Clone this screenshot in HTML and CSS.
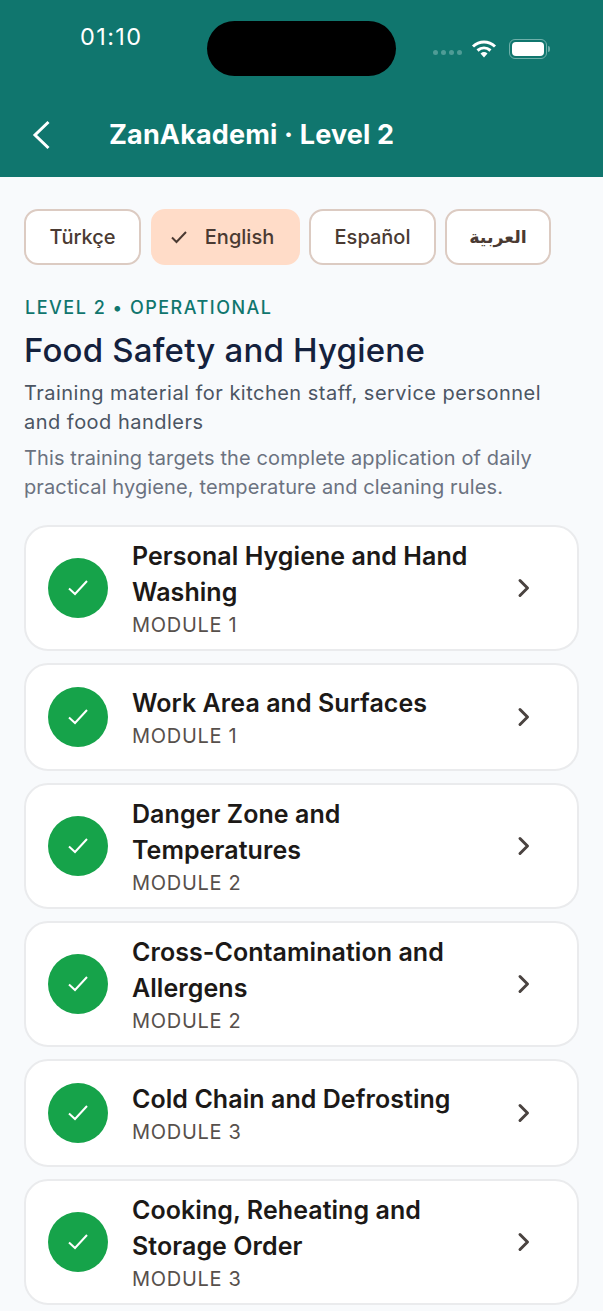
FILE: index.html
```html
<!DOCTYPE html>
<html lang="en">
<head>
  <meta charset="utf-8">
  <title>ZanAkademi - Level 2</title>
  <link rel="stylesheet" href="styles.css">
</head>
<body>

  <!-- Status bar and title -->
  <header class="top">
    <div class="status">
      <span class="time">01:10</span>
      <div class="island"></div>
      <div class="status-icons">
        <div class="signal"><i></i><i></i><i></i><i></i></div>
        <svg class="wifi" width="26" height="20" viewBox="0 0 26 20">
          <path d="M2 7.5C8.5 1.5 17.5 1.5 24 7.5" fill="none" stroke="#fff" stroke-width="3"/>
          <path d="M6.5 11.5C10.5 8 15.5 8 19.5 11.5" fill="none" stroke="#fff" stroke-width="3"/>
          <path d="M9.5 14.5C12 12.6 14 12.6 16.5 14.5L13 18.5Z" fill="#fff"/>
        </svg>
        <div class="battery"><div class="battery-fill"></div></div>
        <div class="battery-tip"></div>
      </div>
    </div>
    <div class="nav">
      <svg class="back" width="20" height="30" viewBox="0 0 20 30">
        <path d="M16.5 2L3 15L16.5 28" fill="none" stroke="#fff" stroke-width="3"/>
      </svg>
      <h1>ZanAkademi · Level 2</h1>
    </div>
  </header>

  <main class="content">
    <div class="langs">
      <button class="lang lang-tr">Türkçe</button>
      <button class="lang lang-en active">
        <svg width="18" height="14" viewBox="0 0 18 14"><path d="M2 7.5L6.5 12L16 2" fill="none" stroke="#4a3a32" stroke-width="2"/></svg>
        English
      </button>
      <button class="lang lang-es">Español</button>
      <button class="lang lang-ar" lang="ar">العربية</button>
    </div>

    <p class="eyebrow">LEVEL 2 • OPERATIONAL</p>
    <h2>Food Safety and Hygiene</h2>
    <p class="sub">Training material for kitchen staff, service personnel and food handlers</p>
    <p class="note">This training targets the complete application of daily practical hygiene, temperature and cleaning rules.</p>

    <ul class="modules">
      <li class="card">
        <div class="done"><svg width="24" height="20" viewBox="0 0 24 20"><path d="M3 10.5L9 16L21 3" fill="none" stroke="#fff" stroke-width="2"/></svg></div>
        <div class="card-text">
          <h3>Personal Hygiene and Hand Washing</h3>
          <span>MODULE 1</span>
        </div>
        <svg class="arrow" width="14" height="20" viewBox="0 0 14 20"><path d="M3 2.5L10.5 10L3 17.5" fill="none" stroke="#4a4340" stroke-width="3" stroke-linecap="round" stroke-linejoin="round"/></svg>
      </li>
      <li class="card">
        <div class="done"><svg width="24" height="20" viewBox="0 0 24 20"><path d="M3 10.5L9 16L21 3" fill="none" stroke="#fff" stroke-width="2"/></svg></div>
        <div class="card-text">
          <h3>Work Area and Surfaces</h3>
          <span>MODULE 1</span>
        </div>
        <svg class="arrow" width="14" height="20" viewBox="0 0 14 20"><path d="M3 2.5L10.5 10L3 17.5" fill="none" stroke="#4a4340" stroke-width="3" stroke-linecap="round" stroke-linejoin="round"/></svg>
      </li>
      <li class="card">
        <div class="done"><svg width="24" height="20" viewBox="0 0 24 20"><path d="M3 10.5L9 16L21 3" fill="none" stroke="#fff" stroke-width="2"/></svg></div>
        <div class="card-text">
          <h3>Danger Zone and Temperatures</h3>
          <span>MODULE 2</span>
        </div>
        <svg class="arrow" width="14" height="20" viewBox="0 0 14 20"><path d="M3 2.5L10.5 10L3 17.5" fill="none" stroke="#4a4340" stroke-width="3" stroke-linecap="round" stroke-linejoin="round"/></svg>
      </li>
      <li class="card">
        <div class="done"><svg width="24" height="20" viewBox="0 0 24 20"><path d="M3 10.5L9 16L21 3" fill="none" stroke="#fff" stroke-width="2"/></svg></div>
        <div class="card-text">
          <h3>Cross-Contamination and Allergens</h3>
          <span>MODULE 2</span>
        </div>
        <svg class="arrow" width="14" height="20" viewBox="0 0 14 20"><path d="M3 2.5L10.5 10L3 17.5" fill="none" stroke="#4a4340" stroke-width="3" stroke-linecap="round" stroke-linejoin="round"/></svg>
      </li>
      <li class="card">
        <div class="done"><svg width="24" height="20" viewBox="0 0 24 20"><path d="M3 10.5L9 16L21 3" fill="none" stroke="#fff" stroke-width="2"/></svg></div>
        <div class="card-text">
          <h3>Cold Chain and Defrosting</h3>
          <span>MODULE 3</span>
        </div>
        <svg class="arrow" width="14" height="20" viewBox="0 0 14 20"><path d="M3 2.5L10.5 10L3 17.5" fill="none" stroke="#4a4340" stroke-width="3" stroke-linecap="round" stroke-linejoin="round"/></svg>
      </li>
      <li class="card">
        <div class="done"><svg width="24" height="20" viewBox="0 0 24 20"><path d="M3 10.5L9 16L21 3" fill="none" stroke="#fff" stroke-width="2"/></svg></div>
        <div class="card-text">
          <h3>Cooking, Reheating and Storage Order</h3>
          <span>MODULE 3</span>
        </div>
        <svg class="arrow" width="14" height="20" viewBox="0 0 14 20"><path d="M3 2.5L10.5 10L3 17.5" fill="none" stroke="#4a4340" stroke-width="3" stroke-linecap="round" stroke-linejoin="round"/></svg>
      </li>
    </ul>
  </main>

</body>
</html>
```

FILE: styles.css
```css
* {
  box-sizing: border-box;
  margin: 0;
  padding: 0;
}

html,
body {
  height: 100%;
  overflow: hidden;
}

body {
  font-family: "Inter", "Noto Sans CJK SC", sans-serif;
  background: #f8fafc;
  color: #1c1917;
}

/* Header */
.top {
  height: 177px;
  background: #10766e;
  color: white;
}

.status {
  display: flex;
  height: 110px;
  padding-top: 21px;
}

.time {
  width: 80px;
  height: 32px;
  margin-left: 80px;
  font-size: 23.5px;
  line-height: 32px;
  letter-spacing: 1.4px;
}

.island {
  width: 189px;
  height: 55px;
  margin-left: 47px;
  border-radius: 28px;
  background: black;
}

.status-icons {
  display: flex;
  align-items: center;
  height: 55px;
  margin-left: 37px;
}

.signal {
  display: flex;
  gap: 3px;
  margin-top: 7px;
  margin-right: 9px;
}

.signal i {
  width: 5px;
  height: 5px;
  border-radius: 50%;
  background: #4f9c96;
}

.wifi {
  margin-right: 12px;
}

.battery {
  width: 38px;
  height: 20px;
  padding: 2px;
  border: 1.5px solid #6fb0aa;
  border-radius: 6px;
}

.battery-fill {
  height: 100%;
  border-radius: 4px;
  background: white;
}

.battery-tip {
  width: 2px;
  height: 6px;
  margin-left: 1px;
  border-radius: 0 2px 2px 0;
  background: #6fb0aa;
}

.nav {
  display: flex;
  align-items: center;
  height: 50px;
}

.back {
  margin-left: 32px;
}

.nav h1 {
  margin-left: 57px;
  font-size: 27px;
  font-weight: 700;
  line-height: 50px;
  letter-spacing: 0.15px;
}

/* Content */
.content {
  padding: 32px 24px 0;
}

.langs {
  display: flex;
  gap: 9px;
}

.lang {
  display: flex;
  align-items: center;
  justify-content: center;
  height: 56px;
  border: 2px solid #dccbc2;
  border-radius: 14px;
  background: white;
  color: #4a3a32;
  font-family: inherit;
  font-size: 20px;
  font-weight: 500;
}

.lang-tr { width: 117px; margin-right: 1px; }
.lang-en { width: 149px; gap: 17px; padding-right: 7px; }
.lang-es { width: 127px; }
.lang-ar { width: 106px; font-family: "DejaVu Sans", sans-serif; font-size: 17.5px; font-weight: 600; }

.lang.active {
  border-color: #ffdcc8;
  background: #ffdcc8;
}

.eyebrow {
  margin-top: 30px;
  padding-left: 1px;
  color: #10766e;
  font-size: 18px;
  font-weight: 500;
  line-height: 26px;
  letter-spacing: 1.5px;
}

.content h2 {
  margin-top: 7px;
  color: #14213d;
  font-size: 33px;
  font-weight: 500;
  line-height: 44px;
  letter-spacing: 0.2px;
}

.sub {
  margin-top: 7px;
  color: #4b5563;
  font-size: 20px;
  line-height: 29px;
  letter-spacing: 0.48px;
}

.note {
  margin-top: 7px;
  color: #6b7280;
  font-size: 20px;
  line-height: 29px;
  letter-spacing: 0.12px;
}

/* Module cards */
.modules {
  display: flex;
  flex-direction: column;
  gap: 12px;
  margin-top: 23px;
  list-style: none;
}

.card {
  display: flex;
  align-items: center;
  min-height: 108px;
  padding: 10.5px 22px;
  border: 2px solid #eaebed;
  border-radius: 24px;
  background: white;
}

.done {
  display: flex;
  flex: none;
  align-items: center;
  justify-content: center;
  width: 60px;
  height: 60px;
  border-radius: 50%;
  background: #16a34a;
}

.card-text {
  flex: 1;
  margin-left: 24px;
}

.card-text h3 {
  color: #1c1917;
  font-size: 25px;
  font-weight: 600;
  line-height: 36px;
  letter-spacing: 0.06px;
}

.card-text span {
  display: block;
  padding-top: 1px;
  color: #57504c;
  font-size: 20px;
  line-height: 28px;
  letter-spacing: 0.7px;
}

.arrow {
  flex: none;
  margin: 0 24px 0 14px;
}
```
